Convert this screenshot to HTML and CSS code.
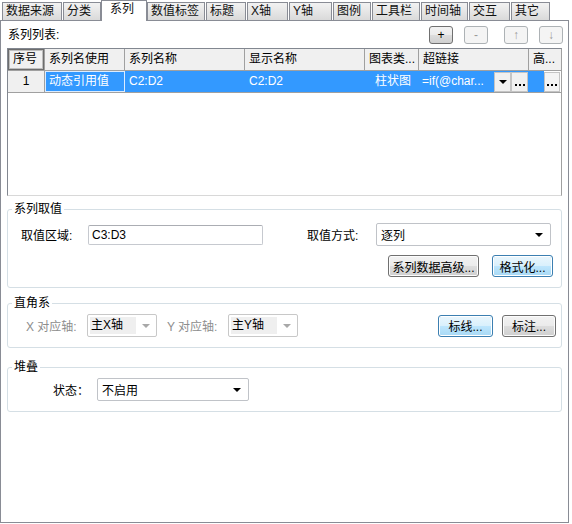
FILE: index.html
```html
<!DOCTYPE html>
<html lang="zh">
<head>
<meta charset="utf-8">
<link rel="stylesheet" href="styles.css">
</head>
<body>
<div class="win">
  <div class="tabs">
    <div class="tab" style="width:60px">数据来源</div>
    <div class="tab" style="width:38px">分类</div>
    <div class="tab active" style="width:46px">系列</div>
    <div class="tab" style="width:58px">数值标签</div>
    <div class="tab" style="width:40px">标题</div>
    <div class="tab" style="width:41px">X轴</div>
    <div class="tab" style="width:43px">Y轴</div>
    <div class="tab" style="width:38px">图例</div>
    <div class="tab" style="width:48px">工具栏</div>
    <div class="tab" style="width:47px">时间轴</div>
    <div class="tab" style="width:41px">交互</div>
    <div class="tab" style="width:39px">其它</div>
  </div>
  <div class="panel">
    <div class="toolbar">
      <span class="lbl">系列列表:</span>
      <div class="tb-btns">
        <button class="sbtn def">+</button>
        <button class="sbtn dis gap1">-</button>
        <button class="sbtn dis gap2">↑</button>
        <button class="sbtn dis gap1">↓</button>
      </div>
    </div>
    <div class="grid">
      <div class="row head">
        <div class="hc sel">序号</div>
        <div class="hc">系列名使用</div>
        <div class="hc">系列名称</div>
        <div class="hc">显示名称</div>
        <div class="hc">图表类...</div>
        <div class="hc">超链接</div>
        <div class="hc">高...</div>
      </div>
      <div class="row data">
        <div class="dc idx">1</div>
        <div class="dc focus">动态引用值</div>
        <div class="dc">C2:D2</div>
        <div class="dc">C2:D2</div>
        <div class="dc center">柱状图</div>
        <div class="dc link"><span class="ltxt">=if(@char...</span><span class="cbtn"><span class="tri"></span></span><span class="cbtn dots"><i></i><i></i><i></i></span></div>
        <div class="dc last"><span class="bluepart"></span><span class="cbtn dots"><i></i><i></i><i></i></span></div>
      </div>
    </div>

    <fieldset class="grp g1">
      <legend>系列取值</legend>
      <div class="inner">
        <div class="r1">
          <span class="l1">取值区域:</span>
          <div class="input">C3:D3</div>
          <span class="l2">取值方式:</span>
          <div class="select w175"><span>逐列</span><span class="tri"></span></div>
        </div>
        <div class="r2">
          <button class="btn w91">系列数据高级...</button>
          <button class="btn focusbtn w61">格式化...</button>
        </div>
      </div>
    </fieldset>

    <fieldset class="grp g2">
      <legend>直角系</legend>
      <div class="inner">
        <span class="gl">X 对应轴:</span>
        <div class="select dsel"><span class="hl">主X轴</span><span class="tri gray"></span></div>
        <span class="gl gl2">Y 对应轴:</span>
        <div class="select dsel"><span class="hl">主Y轴</span><span class="tri gray"></span></div>
        <span class="sp"></span>
        <button class="btn focusbtn w55">标线...</button>
        <button class="btn w54 ml9">标注...</button>
      </div>
    </fieldset>

    <fieldset class="grp g3">
      <legend>堆叠</legend>
      <div class="inner">
        <span class="sl">状态：</span>
        <div class="select w152"><span>不启用</span><span class="tri"></span></div>
      </div>
    </fieldset>
  </div>
</div>
</body>
</html>
```

FILE: styles.css
```css
* { box-sizing: border-box; }
html, body { margin: 0; padding: 0; background: #fff; }
body {
  width: 572px; height: 524px; overflow: hidden;
  font-family: "Liberation Sans", "Noto Sans CJK SC", sans-serif;
  font-size: 12px; color: #000;
}
.tabs {
  display: flex; align-items: flex-end; height: 20px; padding-left: 2px;
  position: relative; z-index: 2;
}
.tab {
  height: 18px; margin-right: 1px;
  border: 1px solid #898c95; border-bottom: none;
  background: linear-gradient(#f2f2f2, #e6e6e6 50%, #d9d9d9);
  text-align: left; padding-left: 3px; line-height: 17px; white-space: nowrap; color: #111;
}
.tab.active {
  height: 21px; margin: 0 0 -1px -1px; background: #fff;
  line-height: 16px; padding-bottom: 4px; padding-left: 8px;
}
.panel {
  width: 569px; height: 503px;
  border: 1px solid #898c95;
  padding: 0 6px;
}
.toolbar { display: flex; align-items: center; height: 18px; margin-top: 5px; }
.lbl { padding-left: 1px; line-height: 14px; }
.tb-btns { margin-left: auto; display: flex; margin-right: -1px; }
.sbtn {
  width: 24px; height: 18px; padding: 0; font: inherit; font-size: 12px; line-height: 14px;
  border-radius: 3px;
}
.sbtn.def { border: 1px solid #707070; background: linear-gradient(#f2f2f2, #ebebeb 50%, #dddddd 50%, #cfcfcf); color: #000; }
.sbtn.dis { border: 1px solid #adb2b5; background: #f4f4f4; color: #9a9a9a; }
.gap1 { margin-left: 11px; }
.gap2 { margin-left: 16px; }
.grid {
  margin-top: 4px; height: 148px;
  border: 1px solid #828790; border-right-color: #a0a0a0; border-bottom-color: #d8d8d8;
}
.row { display: grid; grid-template-columns: 37px 80px 120px 120px 54px 110px 32px; }
.head { height: 22px; }
.hc {
  background: #f0f0f0; border-right: 1px solid #a0a0a0; border-bottom: 1px solid #a0a0a0;
  padding-left: 4px; line-height: 20px; white-space: nowrap; overflow: hidden;
}
.hc.sel { box-shadow: inset 0 0 0 1px #6d6d6d, inset 0 0 0 2px #bdbdbd; padding-left: 5px; }
.hc:last-child { border-right: none; }
.data { height: 22px; border-bottom: 1px solid #a0a0a0; }
.dc {
  background: #3399ff; color: #fff; padding-left: 4px; line-height: 21px;
  white-space: nowrap; overflow: hidden;
}
.dc.idx { background: #f0f0f0; color: #000; text-align: center; border-right: 1px solid #a0a0a0; padding-left: 0; }
.dc.focus { box-shadow: inset 0 0 0 1px #dcecff; }
.dc.center { text-align: center; padding-left: 2px; }
.dc.link { display: flex; align-items: center; padding-left: 3px; padding-right: 1px; }
.ltxt { flex: 1; }
.cbtn {
  width: 17px; height: 20px; background: #f0f0f0; border: 1px solid #c4c4c4;
  display: flex; align-items: center; justify-content: center;
}
.cbtn.dots { align-items: flex-end; padding-bottom: 5px; gap: 2px; }
.cbtn.dots i { display: block; width: 2px; height: 2px; background: #000; }
.dc.last { display: flex; align-items: center; padding-left: 0; background: #fff; }
.bluepart { width: 15px; height: 21px; background: #3399ff; }
.dc.last .cbtn { width: 16px; background: #f4f4f4; }
.tri {
  width: 0; height: 0; border-left: 4px solid transparent; border-right: 4px solid transparent;
  border-top: 4px solid #000;
}
.tri.gray { border-top-color: #a8a8a8; }

.grp {
  border: 1px solid #d5dfe5; border-radius: 3px; margin: 0; padding: 0; min-width: 0;
}
.grp legend {
  padding: 0 2px; margin-left: 4px; line-height: 14px; height: 14px;
}
.g1 { margin-top: 6px; height: 86px; }
.g2 { margin-top: 8px; height: 52px; }
.g3 { margin-top: 12px; height: 52px; }
.g1 .inner { padding: 7px 8px 0 13px; }
.r1 { display: flex; align-items: center; height: 23px; }
.l1 { width: 67px; }
.input {
  width: 175px; height: 20px; border: 1px solid #c6c9cf; border-top-color: #abadb3;
  border-radius: 2px; padding-left: 3px; line-height: 18px;
}
.l2 { margin-left: 44px; width: 69px; }
.select {
  height: 23px; border: 1px solid #c0c3c8; border-radius: 2px; background: #fff;
  display: flex; align-items: center; justify-content: space-between;
  padding: 0 7px 0 4px;
}
.w175 { width: 175px; }
.w152 { width: 152px; }
.r2 { display: flex; justify-content: flex-end; margin-top: 9px; }
.btn {
  height: 22px; padding: 0; font: inherit; font-size: 12px; color: #000;
  border: 1px solid #707070; border-radius: 3px;
  background: linear-gradient(#f2f2f2, #ebebeb 50%, #dddddd 50%, #cfcfcf);
  box-shadow: inset 0 0 0 1px #fcfcfc;
}
.focusbtn {
  border-color: #3c7fb1;
  background: linear-gradient(#eaf6fd, #d9f0fc 50%, #bee6fd 50%, #a7d9f5);
  box-shadow: inset 0 0 0 1px #ffffff, 0 0 0 1px #9dd1f2 inset;
}
.w91 { width: 91px; }
.w61 { width: 61px; margin-left: 13px; }
.w55 { width: 55px; }
.w54 { width: 54px; }
.ml9 { margin-left: 9px; }
.g2 .inner { display: flex; align-items: center; padding: 4px 5px 0 18px; height: 27px; }
.gl { width: 61px; color: #8d8d8d; }
.gl2 { margin-left: 10px; }
.dsel { width: 70px; border-color: #c8c8c8; padding: 0 6px 0 2px; }
.hl { background: #efefef; width: 46px; height: 17px; line-height: 17px; padding-left: 1px; }
.sp { flex: 1; }
.g3 .inner { display: flex; align-items: center; padding: 4px 0 0 45px; }
.sl { width: 44px; }
```
